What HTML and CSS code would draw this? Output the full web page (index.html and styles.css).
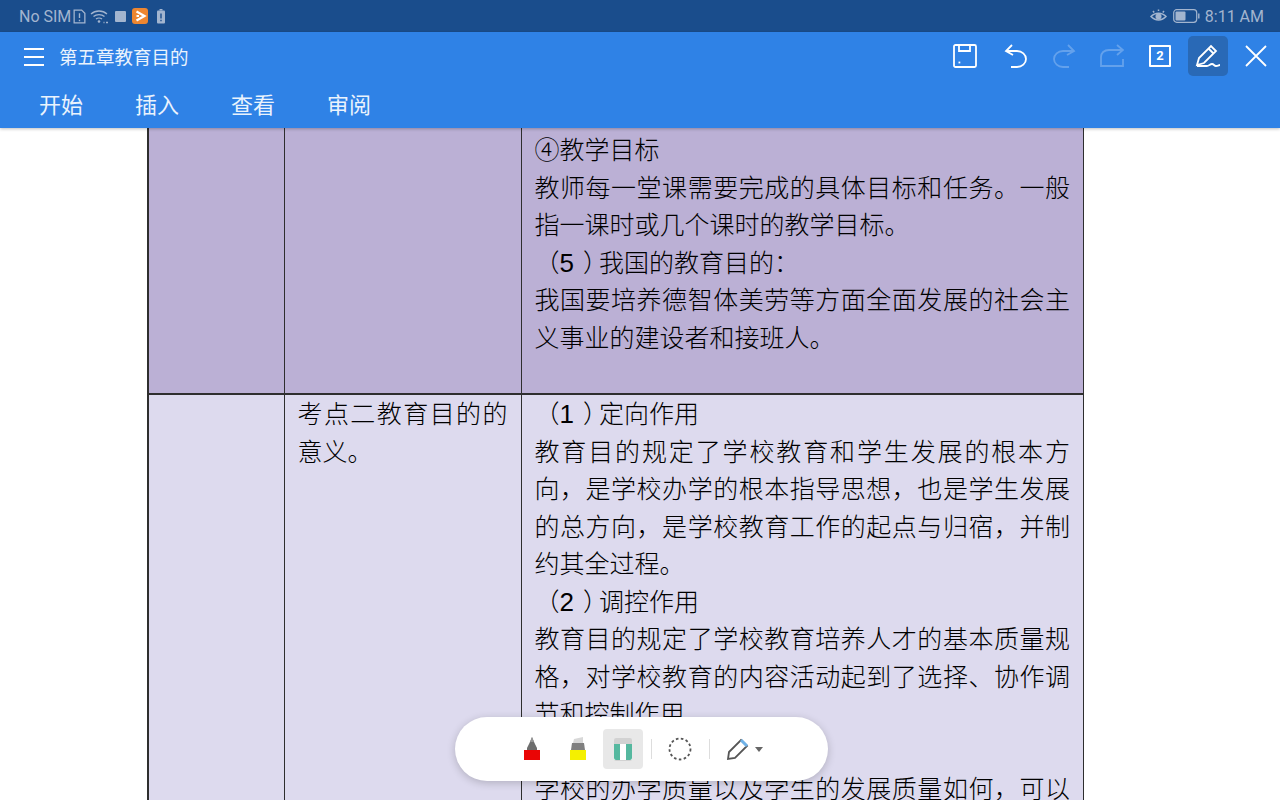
FILE: index.html
```html
<!DOCTYPE html>
<html>
<head>
    <title>第五章教育目的</title>
    <link rel="stylesheet" href="styles.css">
</head>
<body>
    <div class="status-bar">
        <div class="status-group">
            <span class="st-text">No SIM</span>
            <svg class="st-sim" width="13" height="15" viewBox="0 0 12 14"><path d="M1 1h7l3 3v9H1z" fill="none" stroke="#a3b5cf" stroke-width="1.2"/><path d="M6 4v4.500M6 10v1.400" stroke="#a3b5cf" stroke-width="1.300"/></svg>
            <svg class="st-wifi" width="19" height="15" viewBox="0 0 19 15"><g fill="none" stroke="#a3b5cf" stroke-width="1.300"><path d="M1 5c4.500-4 11.500-4 16 0"/><path d="M3.500 7.500c3-2.600 8-2.600 11 0"/><path d="M6 10c1.600-1.300 4.400-1.300 6 0"/></g><circle cx="9" cy="12.500" r="1.300" fill="#a3b5cf"/><path d="M13.500 13.500h1M16 13.500h2" stroke="#a3b5cf" stroke-width="1.400"/></svg>
            <span class="st-square"></span>
            <svg class="st-app" width="16" height="16" viewBox="0 0 16 16"><rect width="16" height="16" rx="3" fill="#ee8630"/><path d="M4.500 3.500 12.500 8l-8 4.500" fill="none" stroke="#fff" stroke-width="2.200"/><path d="M4.500 7h2.500v2H4.500z" fill="#fff"/></svg>
            <svg class="st-batt" width="10" height="15" viewBox="0 0 10 15"><path d="M3.500 0h3v1.500h-3z" fill="#a3b5cf"/><rect x="1" y="1.500" width="8" height="13" rx="1" fill="#a3b5cf"/><path d="M5 4.500v5M5 10.800v1.500" stroke="#1a4d8c" stroke-width="1.400"/></svg>
        </div>
        <div class="status-group">
            <svg width="17" height="14" viewBox="0 0 17 14"><g fill="none" stroke="#a3b5cf" stroke-width="1.500"><path d="M1 7.500c4-4.500 11-4.500 15 0-4 4.500-11 4.500-15 0z"/><path d="M3 2l1.200 1.500M8.500 .5V2M14 2l-1.200 1.500"/></g><circle cx="8.500" cy="7.500" r="3" fill="#a3b5cf"/></svg>
            <svg class="st-level" width="27" height="14" viewBox="0 0 27 14"><rect x=".7" y=".7" width="23" height="12.600" rx="3" fill="none" stroke="#a3b5cf" stroke-width="1.200"/><rect x="2.500" y="2.500" width="10" height="9" rx="1" fill="#a3b5cf"/><path d="M25.800 4.500v5" stroke="#a3b5cf" stroke-width="1.400"/></svg>
            <span class="st-text st-time">8:11 AM</span>
        </div>
    </div>

    <div class="app-bar">
        <div class="title-row">
            <svg class="menu-icon" width="22" height="20" viewBox="0 0 22 20"><path d="M1 2h20M1 10h20M1 18h20" stroke="#fff" stroke-width="2"/></svg>
            <span class="doc-title">第五章教育目的</span>
            <div class="actions">
                <button class="action-btn save-btn">
                    <svg width="24" height="24" viewBox="0 0 24 24" fill="none" stroke="#fff" stroke-width="1.800"><rect x="1" y="1" width="22" height="22" rx="1.500"/><path d="M6 1v6h11V1"/><path d="M5.500 18.500h1.800"/></svg>
                </button>
                <button class="action-btn">
                    <svg width="24" height="24" viewBox="0 0 24 24" fill="none" stroke="#fff" stroke-width="1.800"><path d="M8 1 2 7l7 4"/><path d="M2.500 7H13a9 8 0 0 1 0 16H7"/></svg>
                </button>
                <button class="action-btn dim">
                    <svg width="24" height="24" viewBox="0 0 24 24" fill="none" stroke="#fff" stroke-width="1.800"><path d="M16 1l6 6-7 4"/><path d="M21.500 7H11a9 8 0 0 0 0 16h6"/></svg>
                </button>
                <button class="action-btn dim">
                    <svg width="24" height="24" viewBox="0 0 24 24" fill="none" stroke="#fff" stroke-width="1.800"><path d="M17 1l6 5-6 5"/><path d="M22 6H9C4 6 1 9 1 13v9h22v-7"/></svg>
                </button>
                <button class="action-btn">
                    <span class="page-box">2</span>
                </button>
                <button class="action-btn active">
                    <svg width="26" height="24" viewBox="0 0 26 24" fill="none" stroke="#fff" stroke-width="1.800"><path d="M2 21 4 14 16 2l5 5L9 19z"/><path d="M13.500 4.500l5 5"/><path d="M2 22h10c2 0 3-2 5-2s2 2 4 2 3-1 4-1"/></svg>
                </button>
                <button class="action-btn">
                    <svg width="24" height="24" viewBox="0 0 24 24" stroke="#fff" stroke-width="1.800"><path d="M2 2l20 20M22 2 2 22"/></svg>
                </button>
            </div>
        </div>
        <div class="tabs">
            <span>开始</span>
            <span>插入</span>
            <span>查看</span>
            <span>审阅</span>
        </div>
    </div>

    <div class="doc">
        <table class="sheet">
            <colgroup>
                <col class="col-a">
                <col class="col-b">
                <col class="col-c">
            </colgroup>
            <tr class="row-dark">
                <td></td>
                <td></td>
                <td>
                    <div class="line">④教学目标</div>
                    <div class="line full">教师每一堂课需要完成的具体目标和任务。一般</div>
                    <div class="line">指一课时或几个课时的教学目标。</div>
                    <div class="line">（<span class="num">5</span><span class="close">）</span>我国的教育目的：</div>
                    <div class="line full">我国要培养德智体美劳等方面全面发展的社会主</div>
                    <div class="line">义事业的建设者和接班人。</div>
                    <div class="line">&nbsp;</div>
                </td>
            </tr>
            <tr class="row-light">
                <td></td>
                <td>
                    <div class="line full">考点二教育目的的</div>
                    <div class="line">意义。</div>
                </td>
                <td>
                    <div class="line">（<span class="num">1</span><span class="close">）</span>定向作用</div>
                    <div class="line full">教育目的规定了学校教育和学生发展的根本方</div>
                    <div class="line full">向，是学校办学的根本指导思想，也是学生发展</div>
                    <div class="line full">的总方向，是学校教育工作的起点与归宿，并制</div>
                    <div class="line">约其全过程。</div>
                    <div class="line">（<span class="num">2</span><span class="close">）</span>调控作用</div>
                    <div class="line full">教育目的规定了学校教育培养人才的基本质量规</div>
                    <div class="line full">格，对学校教育的内容活动起到了选择、协作调</div>
                    <div class="line">节和控制作用。</div>
                    <div class="line">（<span class="num">3</span><span class="close">）</span>评价作用</div>
                    <div class="line full">学校的办学质量以及学生的发展质量如何，可以</div>
                </td>
            </tr>
        </table>
    </div>

    <div class="pen-bar">
        <button class="pen-btn">
            <svg width="18" height="26" viewBox="0 0 18 26"><path d="M9 1 11.500 7 14 12v2H4v-2l2.500-5z" fill="#6e6e6e"/><path d="M9 1 11 6H7z" fill="#959595"/><rect x="1" y="14" width="16" height="10" fill="#ea0505"/></svg>
        </button>
        <button class="pen-btn">
            <svg width="18" height="26" viewBox="0 0 18 26"><path d="M5 3 14 1v6H4z" fill="#d8d8d8"/><path d="M3 7h12l1 7H2z" fill="#808080"/><rect x="1" y="14" width="16" height="10" fill="#f4f000"/></svg>
        </button>
        <button class="pen-btn selected">
            <svg width="18" height="23" viewBox="0 0 18 23"><rect width="18" height="23" rx="2" fill="#d2d2d2"/><rect y="6" width="18" height="16" fill="#fff"/><path d="M0 6h6v16H2a2 2 0 0 1-2-2zM12 6h6v14a2 2 0 0 1-2 2h-4z" fill="#55b89f"/></svg>
        </button>
        <span class="pen-sep"></span>
        <button class="pen-btn lasso-btn">
            <svg width="24" height="24" viewBox="0 0 24 24"><circle cx="12" cy="12" r="10.500" fill="none" stroke="#555" stroke-width="1.800" stroke-dasharray="2.600 2.400"/></svg>
        </button>
        <span class="pen-sep"></span>
        <button class="pen-btn pen-more">
            <svg width="24" height="24" viewBox="0 0 24 24" fill="none" stroke="#555" stroke-width="1.800"><path d="M2 22l1-7L15 3l6 6L9 21z"/><path d="M15 3l6 6" stroke="#6fb2e8" stroke-width="3"/></svg>
            <svg width="8" height="5" viewBox="0 0 8 5"><path d="M0 0h8L4 5z" fill="#666"/></svg>
        </button>
    </div>
</body>
</html>
```

FILE: styles.css
```css
* {
    box-sizing: border-box;
}
html, body {
    margin: 0;
    height: 800px;
    overflow: hidden;
}
body {
    font-family: "Noto Sans CJK SC", "Noto Sans", sans-serif;
    background-color: #fff;
    position: relative;
}
.status-bar {
    height: 32px;
    background-color: #1a4d8c;
    color: #a3b5cf;
    font-family: Roboto, sans-serif;
    padding: 0 16px 0 19px;
    display: flex;
    justify-content: space-between;
    align-items: center;
}
.status-group {
    display: flex;
    align-items: center;
    gap: 6px;
}
.st-text {
    font-size: 16px;
}
.st-sim {
    margin-left: -4px;
}
.st-wifi {
    margin-left: -2px;
}
.st-square {
    width: 11px;
    height: 11px;
    border-radius: 1px;
    background-color: #a3b5cf;
}
.st-batt {
    margin-left: 2px;
}
.st-time {
    margin-left: -1px;
}
.app-bar {
    height: 96px;
    background-color: #2f82e6;
    color: #fff;
    box-shadow: 0 1px 3px rgba(0, 0, 0, 0.25);
    position: relative;
    z-index: 2;
}
.title-row {
    height: 48px;
    display: flex;
    align-items: center;
    padding: 0 4px 0 23px;
}
.menu-icon {
    margin-top: 2px;
}
.doc-title {
    font-size: 18.5px;
    margin-left: 14px;
    margin-top: -1px;
    color: #eaf3fd;
}
.actions {
    margin-left: auto;
    display: flex;
    align-items: center;
    gap: 8px;
}
.action-btn {
    width: 40px;
    height: 40px;
    padding: 0;
    border: 0;
    border-radius: 5px;
    background: none;
    display: flex;
    align-items: center;
    justify-content: center;
}
.save-btn {
    margin-right: 3px;
}
.action-btn.dim {
    opacity: 0.25;
}
.action-btn.active {
    background-color: #2969b6;
}
.page-box {
    width: 22px;
    height: 22px;
    border: 2px solid #fff;
    border-radius: 1px;
    color: #fff;
    font-family: Roboto, sans-serif;
    font-size: 13px;
    font-weight: 700;
    line-height: 18px;
    text-align: center;
}
.tabs {
    display: flex;
    gap: 52px;
    padding: 5px 0 0 39px;
    font-size: 22px;
    line-height: 36px;
    color: #eaf3fd;
}
.doc {
    height: 672px;
    overflow: hidden;
}
.sheet {
    margin-left: 147px;
    width: 937px;
    table-layout: fixed;
    border-collapse: collapse;
}
.col-a {
    width: 136px;
}
.col-b {
    width: 237px;
}
.sheet td {
    border: 1px solid #2e2e2e;
    border-top: 0;
    padding: 2px 13px 0;
    vertical-align: top;
}
.sheet td:first-child {
    border-left-width: 2px;
}
.row-dark td {
    background-color: #bbb0d5;
    border-bottom-width: 2px;
}
.row-light td {
    background-color: #dddaee;
    padding-top: 0;
}
.row-light .line:first-child {
    margin-top: -0.5px;
}
.line {
    font-size: 25px;
    font-weight: 300;
    line-height: 37.5px;
    height: 37.5px;
    color: #000;
    white-space: nowrap;
}
.line.full {
    text-align: justify;
    text-align-last: justify;
    white-space: normal;
    overflow: hidden;
}
.num {
    font-family: "Liberation Sans", sans-serif;
    font-size: 26px;
}
.close {
    padding-left: 9px;
    letter-spacing: -9px;
}
.pen-bar {
    position: absolute;
    left: 455px;
    top: 717px;
    width: 373px;
    height: 64px;
    border-radius: 32px;
    background-color: #fff;
    box-shadow: 0 2px 8px rgba(0, 0, 0, 0.2);
    display: flex;
    align-items: center;
    padding-left: 57px;
    z-index: 3;
}
.pen-btn {
    width: 40px;
    height: 40px;
    margin-right: 5.5px;
    padding: 0;
    border: 0;
    border-radius: 4px;
    background: none;
    display: flex;
    align-items: center;
    justify-content: center;
}
.pen-btn.selected {
    background-color: #e8e8e8;
    margin-right: 8px;
}
.pen-btn.lasso-btn {
    margin-right: 9px;
}
.pen-sep {
    width: 1px;
    height: 20px;
    background-color: #ddd;
    margin-right: 8px;
}
.pen-more {
    gap: 5px;
    width: auto;
    padding-left: 8px;
}
```
